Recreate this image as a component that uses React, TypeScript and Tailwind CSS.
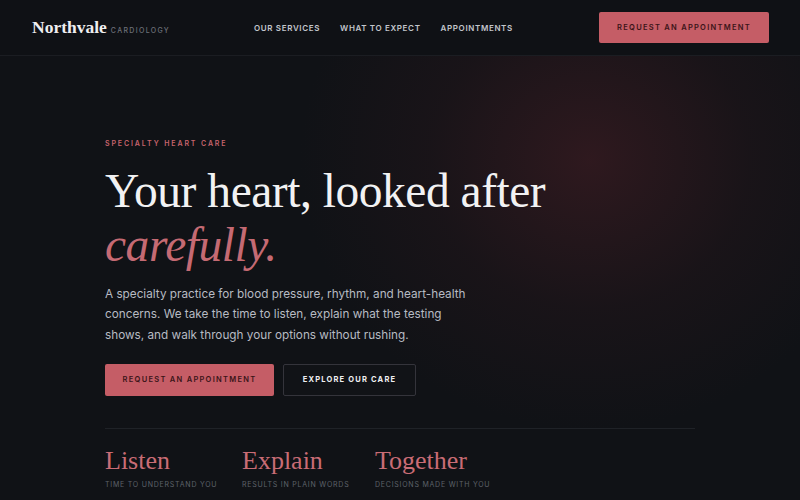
import React from "react";

const sans = "font-['Inter','Liberation_Sans',sans-serif]";
const serif = "font-['Liberation_Serif','DejaVu_Serif',serif]";

const pillars = [
  { title: "Listen", note: "Time to understand you", width: "w-[137px]" },
  { title: "Explain", note: "Results in plain words", width: "w-[133px]" },
  { title: "Together", note: "Decisions made with you", width: "" },
];

const App = () => {
  return (
    <div
      className={`relative w-[800px] h-[500px] overflow-hidden bg-[#101216] ${sans}`}
    >
      {/* warm glow behind the hero */}
      <div className="pointer-events-none absolute left-[300px] top-[-110px] w-[580px] h-[540px] rounded-full bg-[radial-gradient(closest-side,rgba(52,26,32,0.85),rgba(36,22,27,0.45)_55%,rgba(16,18,22,0)_100%)]" />

      {/* Header */}
      <header className="relative flex items-center h-[56px] pl-[32px] pr-[31px] border-b border-[#1b1d22] bg-[#0f1115]">
        <div className="flex items-baseline gap-[4px]">
          <span className={`${serif} text-[17.5px] font-bold text-[#eeeef0]`}>
            Northvale
          </span>
          <span className="text-[7px] tracking-[0.19em] text-[#6c7078] font-medium">
            CARDIOLOGY
          </span>
        </div>
        <nav className="flex items-center gap-[20px] ml-[84px] text-[8px] font-semibold tracking-[0.08em] text-[#c3c6cc]">
          <span>OUR SERVICES</span>
          <span>WHAT TO EXPECT</span>
          <span>APPOINTMENTS</span>
        </nav>
        <button className="ml-auto w-[170px] h-[31px] rounded-[2px] bg-[#c55d66] text-[7.5px] font-semibold tracking-[0.17em] text-[#3a1418]">
          REQUEST AN APPOINTMENT
        </button>
      </header>

      {/* Hero */}
      <section className="relative pl-[105px] pt-[83px]">
        <p className="text-[7px] font-semibold tracking-[0.27em] text-[#c7646d]">
          SPECIALTY HEART CARE
        </p>
        <h1
          className={`${serif} mt-[14px] text-[47.5px] leading-[54px] text-[#f2f2f3] tracking-[-0.01em]`}
        >
          Your heart, looked after
          <br />
          <em className="text-[#c56a73]">carefully.</em>
        </h1>
        <p className="mt-[12px] w-[365px] text-[11.75px] leading-[20.5px] text-[#b7bbc3]">
          A specialty practice for blood pressure, rhythm, and heart-health
          concerns. We take the time to listen, explain what the testing shows,
          and walk through your options without rushing.
        </p>
        <div className="mt-[19px] flex gap-[9px]">
          <button className="w-[169px] h-[32px] rounded-[2px] bg-[#c55d66] text-[7.5px] font-semibold tracking-[0.17em] text-[#3a1418]">
            REQUEST AN APPOINTMENT
          </button>
          <button className="w-[133px] h-[32px] rounded-[2px] border border-[#34343b] bg-[#111317] text-[7.5px] font-bold tracking-[0.16em] text-[#f0f0f2]">
            EXPLORE OUR CARE
          </button>
        </div>

        <div className="mt-[32px] w-[590px] border-t border-[#1f2227]" />

        <div className="mt-[18px] flex">
          {pillars.map((p) => (
            <div key={p.title} className={p.width}>
              <div
                className={`${serif} text-[26px] leading-[28px] text-[#c96c75]`}
              >
                {p.title}
              </div>
              <div className="mt-[5px] text-[7px] tracking-[0.11em] uppercase text-[#5e626a]">
                {p.note}
              </div>
            </div>
          ))}
        </div>
      </section>
    </div>
  );
};

export default App;
